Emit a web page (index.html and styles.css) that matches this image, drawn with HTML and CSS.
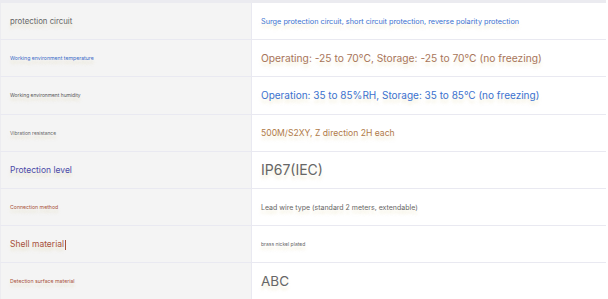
FILE: index.html
```html
<!DOCTYPE html>
<html lang="en">
<head>
    <meta charset="UTF-8">
    <title>Specifications</title>
    <link rel="stylesheet" href="styles.css">
</head>
<body>
    <table class="spec-table">
        <tr>
            <th class="label label-gray size-circuit">protection circuit</th>
            <td class="value value-blue size-surge">Surge protection circuit, short circuit protection, reverse polarity protection</td>
        </tr>
        <tr>
            <th class="label label-blue size-xs">Working environment temperature</th>
            <td class="value value-brown size-lg">Operating: -25 to 70°C, Storage: -25 to 70°C (no freezing)</td>
        </tr>
        <tr>
            <th class="label label-dark size-xxs">Working environment humidity</th>
            <td class="value value-blue size-xl">Operation: 35 to 85%RH, Storage: 35 to 85°C (no freezing)</td>
        </tr>
        <tr>
            <th class="label label-gray size-xxs">Vibration resistance</th>
            <td class="value value-amber size-vib">500M/S2XY, Z direction 2H each</td>
        </tr>
        <tr>
            <th class="label label-indigo size-md">Protection level</th>
            <td class="value value-gray size-big">IP67(IEC)</td>
        </tr>
        <tr>
            <th class="label label-rust size-xs">Connection method</th>
            <td class="value value-gray size-sm">Lead wire type (standard 2 meters, extendable)</td>
        </tr>
        <tr>
            <th class="label label-rust size-md">Shell material<span class="caret"></span></th>
            <td class="value value-gray size-tiny">brass nickel plated</td>
        </tr>
        <tr>
            <th class="label label-rust size-xs">Detection surface material</th>
            <td class="value value-gray size-abc">ABC</td>
        </tr>
    </table>
</body>
</html>
```

FILE: styles.css
```css
body {
    margin: 0;
    background: #fff;
    font-family: Inter, "Noto Sans", sans-serif;
}

.spec-table {
    width: 606px;
    border-collapse: separate;
    border-spacing: 0;
    table-layout: fixed;
    border-top: 3px solid #ebebf0;
}

.spec-table th,
.spec-table td {
    height: 37.2px;
    box-sizing: border-box;
    border-bottom: 1px solid #e9e9f1;
}

.label {
    width: 252px;
    box-sizing: border-box;
    background: #f4f4f4;
    border-left: 1px solid #ececf0;
    border-right: 1px solid #e9e9f1;
    padding: 0 0 0 9px;
    text-align: left;
    font-weight: normal;
}

.value {
    padding: 0 0 0 9px;
}

.label,
.value {
    text-shadow: 0 4px 3px rgba(220, 210, 150, 0.35);
    white-space: nowrap;
}

/* sizes */
.size-tiny { font-size: 5px; }
.size-xxs { font-size: 4.9px; }
.size-xs { font-size: 5.2px; }
.size-sm { font-size: 7px; }
.size-surge { font-size: 7.3px; }
.size-circuit { font-size: 7.8px; }
.size-md { font-size: 8.5px; }
.size-vib { font-size: 8.6px; }
.size-lg { font-size: 10.25px; }
.size-xl { font-size: 10px; }
.size-big { font-size: 14px; }
.size-abc { font-size: 13.5px; }

/* colours */
.label-gray { color: #666; }
.label-blue { color: #3a6bc8; }
.label-dark { color: #555; }
.label-indigo { color: #4b4aa8; }
.label-rust { color: #a8523a; }

.value-blue { color: #3b72d0; }
.value-brown { color: #a8755a; }
.value-amber { color: #b07a48; }
.value-gray { color: #666; }

.caret {
    display: inline-block;
    width: 1px;
    height: 10px;
    margin-left: 1px;
    background: #a8523a;
    vertical-align: middle;
}
```
